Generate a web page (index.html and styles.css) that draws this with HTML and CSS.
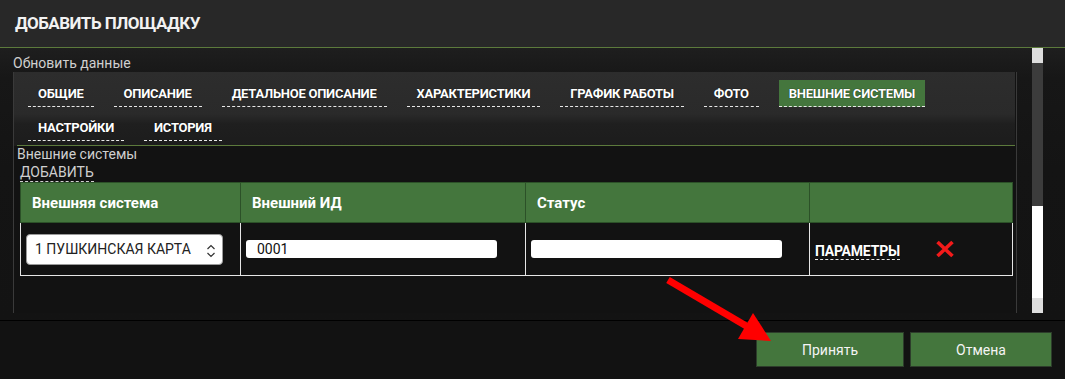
FILE: index.html
```html
<!DOCTYPE html>
<html lang="ru">
<head>
<meta charset="utf-8">
<title>Добавить площадку</title>
<link rel="stylesheet" href="styles.css">
</head>
<body>
<div class="modal">
  <header class="m-head"><h1 class="m-title">ДОБАВИТЬ ПЛОЩАДКУ</h1></header>
  <div class="m-body">
    <div class="scroll">
      <div class="caption">Обновить данные</div>
      <div class="panel">
        <nav class="tabs">
          <a class="tab">ОБЩИЕ</a>
          <a class="tab">ОПИСАНИЕ</a>
          <a class="tab">ДЕТАЛЬНОЕ ОПИСАНИЕ</a>
          <a class="tab">ХАРАКТЕРИСТИКИ</a>
          <a class="tab">ГРАФИК РАБОТЫ</a>
          <a class="tab">ФОТО</a>
          <a class="tab tab-active">ВНЕШНИЕ СИСТЕМЫ</a>
          <a class="tab">НАСТРОЙКИ</a>
          <a class="tab">ИСТОРИЯ</a>
        </nav>
        <div class="section">
          <div class="sec-title">Внешние системы</div>
          <a class="add">ДОБАВИТЬ</a>
          <table class="grid">
            <colgroup>
              <col class="c1"><col class="c2"><col class="c3"><col class="c4">
            </colgroup>
            <thead>
              <tr><th>Внешняя система</th><th>Внешний ИД</th><th>Статус</th><th></th></tr>
            </thead>
            <tbody>
              <tr>
                <td>
                  <div class="select">
                    <span>1 ПУШКИНСКАЯ КАРТА</span>
                    <svg class="chev" width="10" height="16" viewBox="0 0 10 16"><path d="M1.5 6 L5 2.5 L8.5 6 M1.5 10 L5 13.5 L8.5 10" fill="none" stroke="#333" stroke-width="1.2"/></svg>
                  </div>
                </td>
                <td><div class="input">0001</div></td>
                <td><div class="input"></div></td>
                <td>
                  <div class="actions">
                    <a class="params">ПАРАМЕТРЫ</a>
                    <svg class="del" width="18" height="18" viewBox="0 0 18 18"><path d="M1.5 2 L16.5 16 M16.5 2 L1.5 16" stroke="#f21a1a" stroke-width="3.6" stroke-linecap="butt"/></svg>
                  </div>
                </td>
              </tr>
            </tbody>
          </table>
        </div>
      </div>
    </div>
    <div class="scrollbar">
      <span class="sb-up"></span>
      <span class="sb-track"></span>
      <span class="sb-thumb"></span>
      <span class="sb-down"></span>
    </div>
  </div>
  <footer class="m-foot">
    <button class="btn">Принять</button>
    <button class="btn">Отмена</button>
  </footer>
  <svg class="arrow" width="1065" height="379" viewBox="0 0 1065 379">
    <line x1="668" y1="280" x2="748" y2="327" stroke="#ff0000" stroke-width="7"/>
    <polygon points="771,341 753,313 738,339" fill="#ff0000"/>
  </svg>
</div>
</body>
</html>
```
FILE: styles.css
```css
* { box-sizing: border-box; }
html, body { margin: 0; padding: 0; }
body {
  background: #121212;
  font-family: Roboto, "Liberation Sans", Arial, sans-serif;
  color: #ccc;
}
.modal {
  position: relative;
  width: 1065px;
  height: 379px;
  display: flex;
  flex-direction: column;
  overflow: hidden;
}
.m-head {
  height: 48px;
  background: #282828;
  border-bottom: 1px solid #5c7a3c;
  display: flex;
  align-items: center;
  padding-left: 15px;
  padding-bottom: 2px;
}
.m-title {
  margin: 0;
  font-size: 17px;
  font-weight: 700;
  color: #f2f2f2;
  letter-spacing: -0.5px;
}
.m-body {
  height: 272px;
  display: flex;
  padding-bottom: 7px;
  background: linear-gradient(180deg, #1e1e1e 0, #171717 30px, #141414 120px, #131313 100%);
}
.scroll {
  width: 1032px;
  padding: 7px 15px 0 13px;
  display: flex;
  flex-direction: column;
}
.caption {
  font-size: 14px;
  line-height: 17px;
  color: #cfcfcf;
}
.panel {
  flex: 1;
  border-left: 1px solid #3a3a3a;
  border-right: 1px solid #3a3a3a;
  background: #121212;
  display: flex;
  flex-direction: column;
}
.tabs {
  display: flex;
  flex-wrap: wrap;
  column-gap: 20px;
  row-gap: 7px;
  padding: 8px 0 5px 14px;
  margin: 0 1px 0 0;
  background: linear-gradient(180deg, #2d2d2d 0, #2a2a2a 42px, #1f1f1f 52px, #1c1c1c 74px);
  position: relative;
}
.tabs::after {
  content: "";
  position: absolute;
  left: 3px;
  right: 0;
  bottom: 0;
  height: 1px;
  background: #5c7a3c;
}
.tab {
  height: 27px;
  padding: 0 10px;
  display: flex;
  align-items: center;
  font-size: 13px;
  font-weight: 700;
  letter-spacing: -0.25px;
  color: #fff;
  text-shadow: 0 0 1px rgba(0,0,0,0.9);
  border-bottom: 1px dashed #e8e8e8;
}
.tab-active {
  background: #44763d;
}
.section {
  padding-left: 3px;
  padding-right: 4px;
  display: flex;
  flex-direction: column;
  align-items: flex-start;
}
.sec-title {
  font-size: 14px;
  line-height: 17px;
  color: #cfcfcf;
}
.add {
  margin-left: 3px;
  font-size: 14px;
  line-height: 18px;
  color: #cfcfcf;
  border-bottom: 1px dashed #cfcfcf;
}
.grid {
  margin-left: 3px;
  width: 992px;
  border-collapse: collapse;
  table-layout: fixed;
}
.c1 { width: 220px; }
.c2 { width: 285px; }
.c3 { width: 284px; }
.c4 { width: 203px; }
.grid th {
  height: 40px;
  background: #44763d;
  border: 1px solid #2c5128;
  color: #fff;
  font-size: 15px;
  font-weight: 700;
  text-align: left;
  padding: 0 11px;
}
.grid td {
  height: 53px;
  border: 1px solid #e6e6e6;
  border-top-color: #2c5128;
  padding: 0 5px;
  background: #121212;
  vertical-align: middle;
}
.select {
  width: 197px;
  height: 31px;
  background: #fff;
  border: 1px solid #9a9a9a;
  border-radius: 4px;
  display: flex;
  align-items: center;
  justify-content: space-between;
  padding: 0 6px 0 8px;
  font-size: 14px;
  color: #222;
}
.chev { margin-top: 3px; }
.input {
  width: 251px;
  height: 18px;
  background: #fff;
  border-radius: 3px;
  font-size: 14px;
  line-height: 18px;
  color: #111;
  padding-left: 11px;
}
.actions {
  display: flex;
  align-items: center;
  gap: 36px;
}
.params {
  font-size: 14px;
  font-weight: 700;
  letter-spacing: -0.2px;
  color: #fff;
  text-shadow: 0 0 1px rgba(0,0,0,0.9);
  line-height: 16px;
  border-bottom: 1px dashed #e8e8e8;
  margin-top: 4px;
}
.scrollbar {
  width: 11px;
  display: flex;
  flex-direction: column;
}
.sb-up, .sb-down { height: 15px; background: #dedede; }
.sb-track { height: 143px; background: #3c3c3c; }
.sb-thumb { flex: 1; background: #ffffff; }
.m-foot {
  flex: 1;
  border-top: 1px solid #000;
  background: #121212;
  display: flex;
  justify-content: flex-end;
  align-items: flex-start;
  gap: 6px;
  padding: 11px 13px 0 0;
}
.btn {
  height: 35px;
  background: #44763d;
  border: 1px solid #2d3d2b;
  color: #f4f4f4;
  font-family: Roboto, "Liberation Sans", Arial, sans-serif;
  font-size: 14px;
  padding: 0;
}
.btn:first-child { width: 148px; }
.btn:last-child { width: 142px; }
.arrow {
  position: absolute;
  left: 0;
  top: 0;
  pointer-events: none;
}
```
